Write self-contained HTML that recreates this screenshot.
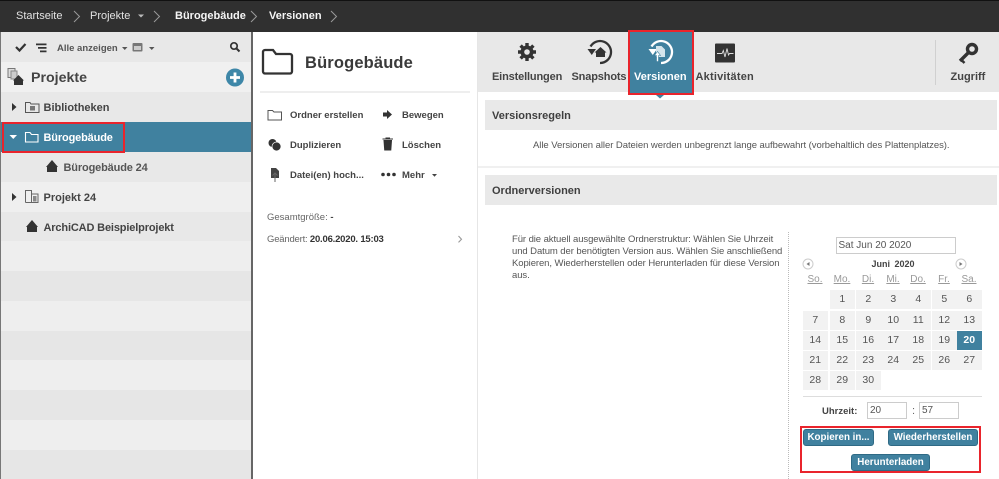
<!DOCTYPE html>
<html><head><meta charset="utf-8"><style>
html,body{margin:0;padding:0}
body{width:999px;height:479px;position:relative;overflow:hidden;background:#fff;font-family:"Liberation Sans",sans-serif;color:#444;filter:blur(.3px)}
.a{position:absolute;white-space:nowrap}
.t{position:absolute;white-space:nowrap;line-height:14px}
.b{font-weight:bold}
svg{position:absolute;overflow:visible}
.cell{position:absolute;width:24.500px;height:19px;background:#f2f2f2;text-align:center;font-size:10.500px;line-height:19px;color:#555}
.dow{position:absolute;font-size:10px;color:#999;text-decoration:underline;line-height:12px;width:30px;text-align:center}
.btn{position:absolute;background:#40819f;border:1px solid #2f6a85;border-radius:3px;color:#fff;font-weight:bold;font-size:9.800px;line-height:15.500px;text-align:center;box-sizing:border-box;height:16.500px;white-space:nowrap}
.inp{position:absolute;border:1px solid #ccc;box-sizing:border-box;font-size:10px;color:#555;padding-left:2px;line-height:16px}
.red{position:absolute;border:2px solid #e9242c;box-sizing:border-box}
.m{font-size:9.500px;color:#444}
.r{font-size:11px;color:#444}
</style></head><body>

<!-- top bar -->
<div class="a" style="left:0;top:0;width:999px;height:32px;background:#303030;border-top:1px solid #111;box-sizing:border-box"></div>
<div class="t" style="left:16px;top:9px;font-size:11px;color:#e2e2e2">Startseite</div>
<div class="t" style="left:90px;top:9px;font-size:11px;color:#e2e2e2">Projekte</div>
<div class="t b" style="left:175px;top:9px;font-size:11px;color:#f5f5f5">Bürogebäude</div>
<div class="t b" style="left:269px;top:9px;font-size:11px;color:#f5f5f5">Versionen</div>
<svg style="left:0;top:0" width="999" height="32" fill="none" stroke="#9a9a9a" stroke-width="1">
<path d="M74 11l5.500 5.500-5.500 5.500M154 11l5.500 5.500-5.500 5.500M251 11l5.500 5.500-5.500 5.500M331 11l5.500 5.500-5.500 5.500"/>
<path d="M138 14.500h6l-3 3z" fill="#bbb" stroke="none"/>
</svg>

<!-- left panel -->
<div class="a" style="left:0;top:32px;width:1px;height:447px;background:#777"></div>
<div class="a" style="left:251px;top:32px;width:2px;height:447px;background:#666"></div>
<div class="a" style="left:1px;top:32px;width:250px;height:447px;background:#e8e8e8"></div>
<div class="a" style="left:1px;top:62px;width:250px;height:30px;background:#f0f0f0"></div>
<div class="a" style="left:1px;top:92px;width:250px;height:30px;background:#e8e8e8"></div>
<div class="a" style="left:1px;top:122px;width:250px;height:30px;background:#40819f"></div>
<div class="a" style="left:1px;top:182px;width:250px;height:30px;background:#efefef"></div>
<div class="a" style="left:1px;top:241px;width:250px;height:30px;background:#eeeeee"></div>
<div class="a" style="left:1px;top:271px;width:250px;height:30px;background:#e6e6e6"></div>
<div class="a" style="left:1px;top:301px;width:250px;height:30px;background:#eeeeee"></div>
<div class="a" style="left:1px;top:331px;width:250px;height:29px;background:#e6e6e6"></div>
<div class="a" style="left:1px;top:360px;width:250px;height:30px;background:#eeeeee"></div>
<div class="a" style="left:1px;top:390px;width:250px;height:30px;background:#e6e6e6"></div>
<div class="a" style="left:1px;top:420px;width:250px;height:30px;background:#eeeeee"></div>
<div class="a" style="left:1px;top:450px;width:250px;height:29px;background:#e6e6e6"></div>

<!-- left toolbar -->
<svg style="left:0;top:32px" width="251" height="30">
<path d="M16 15l3.500 3.500 6-6.500" fill="none" stroke="#333" stroke-width="2.200"/>
<path d="M36 11.500h10.500v1.800h-10.500zM38 15h8.500v1.800h-8.500zM40 18.500h6.500v1.800h-6.500z" fill="#333"/>
<path d="M122 15h5.500l-2.750 3z" fill="#555"/>
<rect x="132.500" y="11" width="10" height="8.500" rx="1" fill="#777"/><rect x="134" y="14" width="7" height="4" fill="#ccc"/>
<path d="M149 15h5.500l-2.750 3z" fill="#555"/>
<circle cx="234" cy="14" r="3.200" fill="none" stroke="#333" stroke-width="1.700"/><path d="M236.500 16.500l3 3" stroke="#333" stroke-width="2"/>
</svg>
<div class="t b" style="left:57px;top:41.500px;font-size:9.500px;color:#555">Alle anzeigen</div>

<!-- tree -->
<svg style="left:7px;top:68px" width="20" height="20">
<rect x="1" y="0.500" width="7" height="9" fill="#ddd" stroke="#777"/>
<rect x="4" y="3" width="6" height="8" fill="#ccc" stroke="#888"/>
<path d="M11.500 7l5.500 5.500h-1v4.500H7v-4.500H6z" fill="#333"/>
</svg>
<div class="t b" style="left:31px;top:70px;font-size:14.200px;line-height:16px;color:#444">Projekte</div>
<svg style="left:226px;top:68px" width="20" height="20"><circle cx="9" cy="9.500" r="9" fill="#3e87a8"/><path d="M4 9.500h10M9 4.500v10" stroke="#fff" stroke-width="2.800"/></svg>

<svg style="left:0;top:92px" width="251" height="150">
<path d="M12 11l4.500 4-4.500 4z" fill="#333"/>
<path d="M25.500 10.500h4.500l1 1.500h8v8.500h-13.500z" fill="none" stroke="#555" stroke-width="1"/><rect x="30" y="14" width="5" height="4.500" fill="#777"/>
<path d="M9.500 43h7.500l-3.750 4z" fill="#fff"/>
<path d="M25.500 40.500h4.500l1.500 2h6.500v7.500h-12.500z" fill="none" stroke="#fff" stroke-width="1.100"/>
<path d="M52 68l6 7h-1v5H47v-5h-1z" fill="#333"/>
<path d="M12 101l4.500 4-4.500 4z" fill="#333"/>
<path d="M25.500 110.500v-12h6v12M31.500 102h6.500v8.500h-12.500" fill="none" stroke="#666" stroke-width="1"/><rect x="33" y="104" width="3.500" height="5.500" fill="#888"/>
<path d="M32 128l6 7h-1v5H27v-5h-1z" fill="#333"/>
</svg>
<div class="t b r" style="left:43.500px;top:101px">Bibliotheken</div>
<div class="t b" style="left:43.500px;top:131px;font-size:11px;color:#fff;letter-spacing:-.15px">Bürogebäude</div>
<div class="t b" style="left:63.500px;top:161px;font-size:11px;color:#555;letter-spacing:-.15px">Bürogebäude 24</div>
<div class="t b r" style="left:43.500px;top:191px">Projekt 24</div>
<div class="t b r" style="left:43.500px;top:221px;letter-spacing:-.15px">ArchiCAD Beispielprojekt</div>
<div class="red" style="left:2px;top:122px;width:123px;height:31px"></div>

<!-- middle panel -->
<svg style="left:253px;top:32px" width="224" height="230">
<path d="M10 20a2 2 0 0 1 2-2h8l3 4h14a2 2 0 0 1 2 2v15.500a2 2 0 0 1-2 2h-25a2 2 0 0 1-2-2z" fill="none" stroke="#333" stroke-width="2.300"/>
<path d="M15 78.500h4.500l1.500 1.500h7.500v8h-13.500z" fill="none" stroke="#555" stroke-width="1"/>
<circle cx="19.500" cy="111" r="4" fill="#333"/><circle cx="23.500" cy="114.500" r="4.500" fill="#333" stroke="#fff" stroke-width=".7"/>
<path d="M18 136h5l3 3v7h-8z" fill="#444"/><path d="M22 150v-9M19.500 143.500l2.500-2.500 2.500 2.500" stroke="#666" stroke-width="1" fill="none"/>
<path d="M130 80.500h4v-2.500l5 4.500-5 4.500v-2.500h-4z" fill="#333"/>
<path d="M129.500 107h10.500M133 107v-1h3.500v1M131 108.500l.7 9.500h6.100l.7-9.500z" fill="#333" stroke="#333" stroke-width="1"/>
<circle cx="130" cy="142.500" r="1.800" fill="#333"/><circle cx="135.500" cy="142.500" r="1.800" fill="#333"/><circle cx="141" cy="142.500" r="1.800" fill="#333"/>
<path d="M179 142h5l-2.500 2.800z" fill="#444"/>
<path d="M205.500 204l3 3.200-3 3.200" fill="none" stroke="#999" stroke-width="1.100"/>
</svg>
<div class="t b" style="left:305px;top:53px;font-size:16.500px;line-height:20px;color:#3a3a3a;letter-spacing:.15px">Bürogebäude</div>
<div class="a" style="left:260px;top:91px;width:210px;height:2px;background:#eee"></div>
<div class="t b m" style="left:290px;top:109px">Ordner erstellen</div>
<div class="t b m" style="left:402px;top:109px">Bewegen</div>
<div class="t b m" style="left:290px;top:139px">Duplizieren</div>
<div class="t b m" style="left:402px;top:139px">Löschen</div>
<div class="t b m" style="left:290px;top:169px">Datei(en) hoch...</div>
<div class="t b m" style="left:402px;top:169px">Mehr</div>
<div class="t" style="left:267px;top:211px;font-size:9.500px;color:#666">Gesamtgröße: <b style="color:#444">-</b></div>
<div class="t" style="left:267px;top:233px;font-size:9.500px;color:#666;letter-spacing:-.2px">Geändert: <b style="color:#333">20.06.2020. 15:03</b></div>
<div class="a" style="left:477px;top:32px;width:1px;height:447px;background:#e6e6e6"></div>

<!-- right toolbar -->
<div class="a" style="left:478px;top:32px;width:521px;height:60px;background:#e8e8e8"></div>
<div class="a" style="left:935px;top:40px;width:1px;height:45px;background:#d0d0d0"></div>
<div class="a" style="left:630px;top:32px;width:62px;height:61px;background:#40819f"></div>
<svg style="left:478px;top:32px" width="521" height="66">
<circle cx="49" cy="20" r="6.500" fill="#333"/>
<path d="M49 11v18M40 20h18M42.600 13.600l12.800 12.800M42.600 26.400l12.800-12.800" stroke="#333" stroke-width="3.400"/>
<circle cx="49" cy="20" r="2.800" fill="#e8e8e8"/>
<path d="M122 31A11 11 0 1 0 112.500 14.500" fill="none" stroke="#333" stroke-width="2.300"/><path d="M109.500 17h8.500l-4.250 6z" fill="#333"/>
<path d="M122.500 15l6 5.500h-1.500v4.500h-9v-4.500h-1.500z" fill="#333"/>
<path d="M183 31A11 11 0 1 0 173.500 14.500" fill="none" stroke="#fff" stroke-width="2.300"/><path d="M170.500 17h8.500l-4.250 6z" fill="#fff"/>
<path d="M178 14h5.500l3.500 3.500v7.500h-9z" fill="#d5e5ec"/><path d="M176.500 23.500l3-4 3 4h-2v6h-2v-6z" fill="#fff" stroke="#40819f" stroke-width=".6"/>
<path d="M178 63h8l-4 3.500z" fill="#40819f"/>
<rect x="237" y="11.500" width="20" height="19" rx="1" fill="#333"/>
<path d="M239 21.500h5l1.300-3 1.700 6.500 2-8.500 1.500 6.500 1-1.500h4" fill="none" stroke="#ddd" stroke-width=".9"/>
<circle cx="494" cy="17" r="4.500" fill="none" stroke="#333" stroke-width="3.400"/>
<path d="M490.500 20.500l-8.500 8.500" stroke="#333" stroke-width="3.400"/><path d="M484 28.500l2.500 2.500" stroke="#333" stroke-width="2.500"/>
</svg>
<div class="t b r" style="left:492px;top:70px;letter-spacing:-.15px">Einstellungen</div>
<div class="t b r" style="left:571.500px;top:70px;letter-spacing:-.15px">Snapshots</div>
<div class="t b" style="left:634px;top:70px;font-size:11px;color:#fff">Versionen</div>
<div class="t b r" style="left:695.500px;top:70px;letter-spacing:.2px">Aktivitäten</div>
<div class="t b r" style="left:950.500px;top:70px">Zugriff</div>
<div class="red" style="left:628px;top:30px;width:66px;height:65px"></div>

<!-- sections -->
<div class="a" style="left:485px;top:100px;width:512px;height:29.500px;background:#e9e9e9"></div>
<div class="t b" style="left:492px;top:108.500px;font-size:11px;color:#3f3f3f">Versionsregeln</div>
<div class="t" style="left:533px;top:139px;font-size:9.500px;color:#555;letter-spacing:-.05px">Alle Versionen aller Dateien werden unbegrenzt lange aufbewahrt (vorbehaltlich des Plattenplatzes).</div>
<div class="a" style="left:478px;top:166px;width:521px;height:2px;background:#f0f0f0"></div>
<div class="a" style="left:485px;top:175px;width:512px;height:29.500px;background:#e9e9e9"></div>
<div class="t b" style="left:492px;top:183.500px;font-size:11px;color:#3f3f3f">Ordnerversionen</div>
<div class="a" style="left:512px;top:234px;font-size:9.500px;line-height:12px;color:#555;letter-spacing:-.08px">Für die aktuell ausgewählte Ordnerstruktur: Wählen Sie Uhrzeit<br>und Datum der benötigten Version aus. Wählen Sie anschließend<br>Kopieren, Wiederherstellen oder Herunterladen für diese Version<br>aus.</div>
<div class="a" style="left:788px;top:232px;width:0;height:247px;border-left:1px dotted #bbb"></div>

<!-- calendar -->
<div class="inp" style="left:835.500px;top:237px;width:120.500px;height:16.500px">Sat Jun 20 2020</div>
<svg style="left:803px;top:257px" width="170" height="14">
<circle cx="5" cy="7" r="5" fill="none" stroke="#ccc"/><path d="M6.500 5v4l-3-2z" fill="#777"/>
<circle cx="158" cy="7" r="5" fill="none" stroke="#ccc"/><path d="M156.500 5v4l3-2z" fill="#777"/>
</svg>
<div class="t b" style="left:871.500px;top:256.500px;font-size:9px;color:#444;word-spacing:2px">Juni 2020</div>
<div class="dow" style="left:800px;top:274px">So.</div>
<div class="dow" style="left:827px;top:274px">Mo.</div>
<div class="dow" style="left:853px;top:274px">Di.</div>
<div class="dow" style="left:878px;top:274px">Mi.</div>
<div class="dow" style="left:903px;top:274px">Do.</div>
<div class="dow" style="left:929px;top:274px">Fr.</div>
<div class="dow" style="left:954px;top:274px">Sa.</div>

<div class="cell" style="left:830px;top:290px">1</div><div class="cell" style="left:856px;top:290px">2</div><div class="cell" style="left:881px;top:290px">3</div><div class="cell" style="left:906px;top:290px">4</div><div class="cell" style="left:932px;top:290px">5</div><div class="cell" style="left:957px;top:290px">6</div>
<div class="cell" style="left:803px;top:311px">7</div><div class="cell" style="left:830px;top:311px">8</div><div class="cell" style="left:856px;top:311px">9</div><div class="cell" style="left:881px;top:311px">10</div><div class="cell" style="left:906px;top:311px">11</div><div class="cell" style="left:932px;top:311px">12</div><div class="cell" style="left:957px;top:311px">13</div>
<div class="cell" style="left:803px;top:331px">14</div><div class="cell" style="left:830px;top:331px">15</div><div class="cell" style="left:856px;top:331px">16</div><div class="cell" style="left:881px;top:331px">17</div><div class="cell" style="left:906px;top:331px">18</div><div class="cell" style="left:932px;top:331px">19</div><div class="cell b" style="left:957px;top:331px;background:#40819f;color:#fff">20</div>
<div class="cell" style="left:803px;top:351px">21</div><div class="cell" style="left:830px;top:351px">22</div><div class="cell" style="left:856px;top:351px">23</div><div class="cell" style="left:881px;top:351px">24</div><div class="cell" style="left:906px;top:351px">25</div><div class="cell" style="left:932px;top:351px">26</div><div class="cell" style="left:957px;top:351px">27</div>
<div class="cell" style="left:803px;top:371px">28</div><div class="cell" style="left:830px;top:371px">29</div><div class="cell" style="left:856px;top:371px">30</div>

<div class="a" style="left:803px;top:396px;width:179px;height:1px;background:#ddd"></div>
<div class="t b" style="left:822px;top:405px;font-size:9.500px;color:#444">Uhrzeit:</div>
<div class="inp" style="left:867px;top:402px;width:40px;height:17px">20</div>
<div class="t" style="left:912px;top:404px;font-size:11px;color:#666">:</div>
<div class="inp" style="left:919px;top:402px;width:40px;height:17px">57</div>

<div class="red" style="left:800px;top:426px;width:181px;height:47px"></div>
<div class="btn" style="left:803px;top:429px;width:71px">Kopieren in...</div>
<div class="btn" style="left:888px;top:429px;width:90px">Wiederherstellen</div>
<div class="btn" style="left:851px;top:454px;width:79px">Herunterladen</div>
</body></html>
